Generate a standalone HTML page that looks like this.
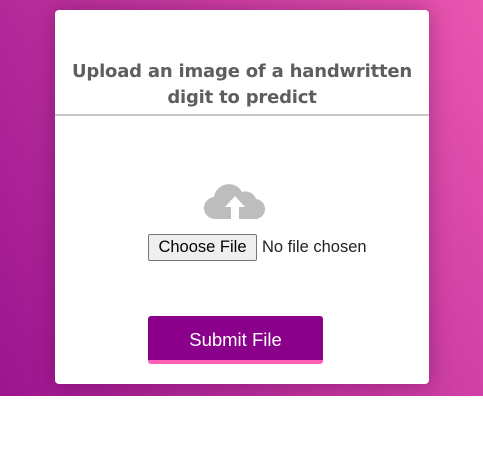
<!DOCTYPE html>
<html><head><style>
body{margin:0;width:483px;height:454px;background:#fff;font-family:"Liberation Sans",Arial,sans-serif;position:relative;overflow:hidden}
.bg{position:absolute;left:0;top:0;width:483px;height:396px;background:linear-gradient(60deg,#9c1490 0%,#c2359f 50%,#ea56b0 100%);overflow:hidden}
.card{position:absolute;left:55px;top:10px;width:374px;height:374px;background:#fff;border-radius:4px;box-shadow:0 0 22px rgba(60,0,50,.35)}
h1{position:absolute;left:0;top:49px;width:374px;margin:0;text-align:center;font-family:"DejaVu Sans",sans-serif;font-weight:bold;font-size:18px;line-height:26px;color:#5e5e5e;letter-spacing:-0.2px}
.line{position:absolute;left:0;top:104px;width:374px;height:2px;background:#c8c8c8}
.cloud{position:absolute;left:149px;top:172px}
.fb{position:absolute;left:93px;top:224px;width:107px;height:25px;border:1px solid #767676;border-radius:2px;background:#efefef;font-size:16.5px;line-height:25px;text-align:center;color:#000}
.nf{position:absolute;left:207px;top:225px;font-size:16.5px;color:#222;line-height:24px}
.sub{position:absolute;left:93px;top:306px;width:175px;height:44px;background:#8b008b;border-radius:3px;border-bottom:4px solid #ff5fb4;color:#fff;font-size:18.5px;line-height:48px;text-align:center}
</style></head><body>
<div class="bg">
<div class="card">
<h1>Upload an image of a handwritten<br>digit to predict</h1>
<div class="line"></div>
<svg class="cloud" width="62" height="38" viewBox="0 0 62 38">
<path d="M12 37 A11 11 0 0 1 10 15 A15 15 0 0 1 38 10 A11 11 0 0 1 52 17 A10 10 0 0 1 50 37 Z" fill="#bdbdbd"/>
<path d="M31 14 L21 25 L27 25 L27 37 L35 37 L35 25 L41 25 Z" fill="#fff"/>
</svg>
<div class="fb">Choose File</div>
<div class="nf">No file chosen</div>
<div class="sub">Submit File</div>
</div>
</div>
</body></html>
